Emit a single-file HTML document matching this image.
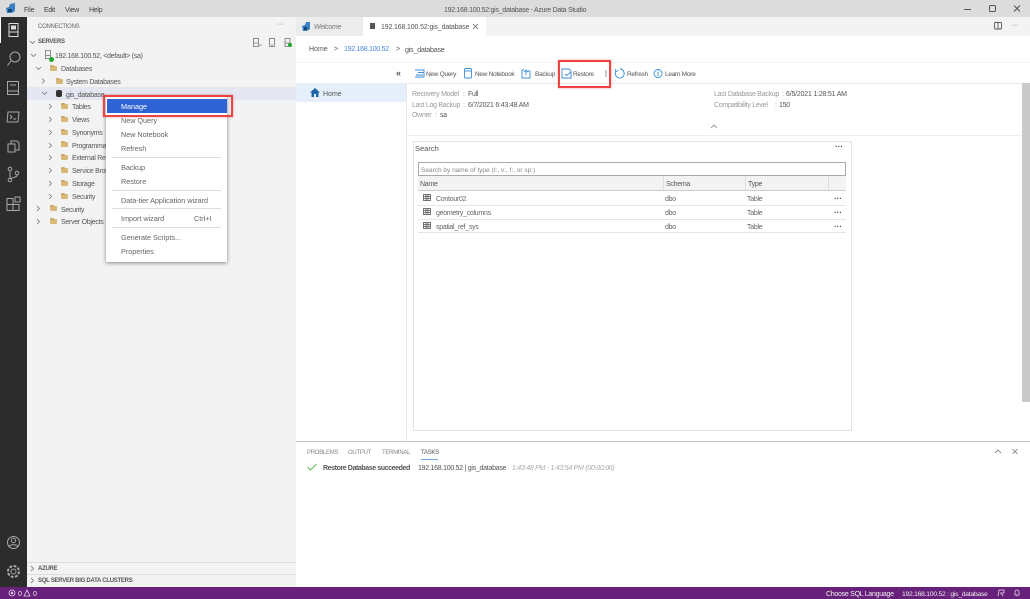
<!DOCTYPE html>
<html><head><meta charset="utf-8"><style>
html,body{margin:0;padding:0;width:1030px;height:599px;overflow:hidden;background:#fff}
#r{position:relative;width:1030px;height:599px;overflow:hidden;font-family:"Liberation Sans",sans-serif;font-size:7px;letter-spacing:-.27px;color:#555;filter:blur(.35px)}
#r div{position:absolute;white-space:nowrap}
.t{line-height:14px;height:14px}
svg{position:absolute;overflow:visible}
.f{width:7px;height:5px;background:#d8b878;border-radius:1px}
.f:before{content:"";position:absolute;left:0;top:-1px;width:4px;height:2px;background:#c9a968;border-radius:1px}
.m{color:#666;left:121px;font-size:7.3px;letter-spacing:-.05px}
.sep{left:112px;width:109px;height:1px;background:#ddd}
.dots{color:#444;font-weight:bold;font-size:8px;letter-spacing:0}
.u{font-size:6px}
</style></head><body><div id="r">

<!-- title bar -->
<div style="left:0;top:0;width:1030px;height:17px;background:#dcdcdc"></div>
<svg style="left:5px;top:3px" width="11" height="11" viewBox="0 0 11 11"><path d="M1 5l3-1 1-3 5-1v8l-3 2H2z" fill="#3b7fc4"/><path d="M3 6h4v3H3z" fill="#17466f"/></svg>
<div class="t" style="left:24px;top:4px;color:#444">File</div>
<div class="t" style="left:44px;top:4px;color:#444">Edit</div>
<div class="t" style="left:65px;top:4px;color:#444">View</div>
<div class="t" style="left:89px;top:4px;color:#444">Help</div>
<div class="t" style="left:444px;top:4px;color:#555">192.168.100.52:gis_database - Azure Data Studio</div>
<svg style="left:960px;top:3px" width="70" height="12" viewBox="0 0 70 12" fill="none" stroke="#555" stroke-width="1"><path d="M4 6.500h7"/><rect x="29.500" y="2.500" width="6" height="6" rx="1"/><path d="M54 2.500l6 6M60 2.500l-6 6"/></svg>

<!-- activity bar -->
<div style="left:0;top:17px;width:27px;height:570px;background:#2c2c2c"></div>
<div style="left:0;top:17px;width:1px;height:26px;background:#fff"></div>
<svg style="left:0;top:17px" width="27" height="570" viewBox="0 0 27 570" fill="none" stroke="#a9a9a9" stroke-width="1">
<g stroke="#ddd"><rect x="9" y="6.500" width="9" height="13"/><path d="M9 15h9"/><rect x="11" y="8.500" width="5" height="4" fill="#ddd" stroke="none"/></g>
<circle cx="15" cy="40" r="5"/><path d="M11 44l-3.500 4.500"/>
<rect x="7.500" y="64.500" width="11" height="13"/><path d="M7.500 74h11M10 68h6"/>
<path d="M8 95h11l-1 10H7zM10 98l2 2-2 2M13 102h3"/>
<path d="M8 127h7v8H8zM11 127v-3h6l2 2v7h-4"/>
<circle cx="10" cy="152" r="1.800"/><circle cx="10" cy="163" r="1.800"/><circle cx="17" cy="156" r="1.800"/><path d="M10 154v7M17 158c0 3-5 2-7 4"/>
<path d="M7 181.500h6v6H7zM7 187.500h6v6H7zM13 187.500h6v6h-6zM15 180h5v5h-5z"/>
<circle cx="13.500" cy="525.500" r="6"/><circle cx="13.500" cy="523.500" r="2.200"/><path d="M9 530c1-3 8-3 9 0"/>
<circle cx="13.500" cy="554.500" r="2.500"/><circle cx="13.500" cy="554.500" r="5.500" stroke-dasharray="2.800 1.500" stroke-width="2"/>
</svg>

<!-- sidebar -->
<div style="left:27px;top:17px;width:269px;height:570px;background:#f3f3f3"></div>
<div class="t u" style="left:38px;top:20px;color:#666">CONNECTIONS</div>
<div class="t" style="left:277px;top:18px;color:#666">···</div>
<div class="t u" style="left:38px;top:35px;font-weight:bold;color:#555">SERVERS</div>
<div style="left:27px;top:87px;width:269px;height:13px;background:#e4e6f1"></div>
<svg style="left:27px;top:17px" width="269" height="225" viewBox="27 17 269 225" fill="none" stroke="#777" stroke-width=".8">
<path d="M30 41l2.500 2.500L35 41M31 54l2.500 2.500L36 54M36 67l2.500 2.500L41 67M42 78.500l2.500 2.500-2.500 2.500M42 92l2.500 2.500L47 92"/>
<path d="M49 104l2.500 2.500-2.500 2.500M49 117l2.500 2.500-2.500 2.500M49 130l2.500 2.500-2.500 2.500M49 143l2.500 2.500-2.500 2.500M49 155l2.500 2.500-2.500 2.500M49 168l2.500 2.500-2.500 2.500M49 181l2.500 2.500-2.500 2.500M49 194l2.500 2.500-2.500 2.500"/>
<path d="M37 206l2.500 2.500-2.500 2.500M37 219l2.500 2.500-2.500 2.500"/>
<rect x="45.500" y="50.500" width="5" height="8"/><path d="M45.500 55.500h5"/>
<rect x="253.500" y="38.500" width="5" height="8"/><path d="M253.500 43h5M259 45h3"/>
<rect x="269.500" y="38.500" width="5" height="8"/><path d="M272 47v-3"/>
<rect x="285" y="38.500" width="5" height="8"/><path d="M285 43h5"/>
</svg>
<div style="left:49px;top:57px;width:5px;height:5px;border-radius:50%;background:#1fa82e"></div>
<div style="left:288px;top:43px;width:4px;height:4px;border-radius:50%;background:#1fa82e"></div>
<div class="t" style="left:55px;top:50px">192.168.100.52, &lt;default&gt; (sa)</div>
<div class="f" style="left:50px;top:66px"></div><div class="t" style="left:61px;top:63px">Databases</div>
<div class="f" style="left:56px;top:79px"></div><div class="t" style="left:66px;top:76px">System Databases</div>
<div style="left:56px;top:90px;width:6px;height:7px;background:#333;border-radius:2px"></div><div class="t" style="left:66px;top:89px">gis_database</div>
<div class="f" style="left:61px;top:104px"></div><div class="t" style="left:72px;top:101px">Tables</div>
<div class="f" style="left:61px;top:117px"></div><div class="t" style="left:72px;top:114px">Views</div>
<div class="f" style="left:61px;top:130px"></div><div class="t" style="left:72px;top:127px">Synonyms</div>
<div class="f" style="left:61px;top:142px"></div><div class="t" style="left:72px;top:140px">Programmability</div>
<div class="f" style="left:61px;top:155px"></div><div class="t" style="left:72px;top:152px">External Resources</div>
<div class="f" style="left:61px;top:168px"></div><div class="t" style="left:72px;top:165px">Service Broker</div>
<div class="f" style="left:61px;top:181px"></div><div class="t" style="left:72px;top:178px">Storage</div>
<div class="f" style="left:61px;top:194px"></div><div class="t" style="left:72px;top:191px">Security</div>
<div class="f" style="left:50px;top:206px"></div><div class="t" style="left:61px;top:204px">Security</div>
<div class="f" style="left:50px;top:219px"></div><div class="t" style="left:61px;top:216px">Server Objects</div>

<div style="left:27px;top:562px;width:269px;height:1px;background:#ddd"></div>
<div style="left:27px;top:574px;width:269px;height:1px;background:#ddd"></div>
<svg style="left:27px;top:563px" width="20" height="24" fill="none" stroke="#777" stroke-width=".8"><path d="M4 3l2.500 2.500L4 8M4 15l2.500 2.500L4 20"/></svg>
<div class="t u" style="left:38px;top:562px;font-weight:bold">AZURE</div>
<div class="t u" style="left:38px;top:574px;font-weight:bold">SQL SERVER BIG DATA CLUSTERS</div>

<!-- context menu -->
<div style="left:106px;top:97px;width:121px;height:165px;background:#fff;box-shadow:0 1px 4px rgba(0,0,0,.45)"></div>
<div style="left:107px;top:99px;width:120px;height:14px;background:#2f62d5"></div>
<div class="t m" style="top:100px;color:#fff">Manage</div>
<div class="t m" style="top:114px">New Query</div>
<div class="t m" style="top:128px">New Notebook</div>
<div class="t m" style="top:142px">Refresh</div>
<div class="sep" style="top:157px"></div>
<div class="t m" style="top:161px">Backup</div>
<div class="t m" style="top:175px">Restore</div>
<div class="sep" style="top:190px"></div>
<div class="t m" style="top:194px">Data-tier Application wizard</div>
<div class="sep" style="top:208px"></div>
<div class="t m" style="top:212px">Import wizard</div>
<div class="t m" style="left:194px;top:212px">Ctrl+I</div>
<div class="sep" style="top:227px"></div>
<div class="t m" style="top:231px">Generate Scripts...</div>
<div class="t m" style="top:245px">Properties</div>
<div style="left:103px;top:95px;width:126px;height:18px;border:2px solid #ee4444;box-shadow:0 0 2px rgba(200,60,60,.5)"></div>

<!-- tabs -->
<div style="left:296px;top:17px;width:734px;height:19px;background:#f3f3f3"></div>
<div style="left:296px;top:17px;width:67px;height:19px;background:#ececec"></div>
<div style="left:363px;top:17px;width:123px;height:19px;background:#fff"></div>
<svg style="left:301px;top:22px" width="10" height="10" viewBox="0 0 10 10"><path d="M1 4l3-1 1-3 4 0v7l-3 2H2z" fill="#3b7fc4"/><path d="M3 5h3v3H3z" fill="#17466f"/></svg>
<div class="t" style="left:314px;top:21px;font-style:italic;color:#777">Welcome</div>
<div style="left:370px;top:23px;width:5px;height:6px;background:#555"></div>
<div class="t" style="left:381px;top:21px;letter-spacing:-.15px">192.168.100.52:gis_database</div>
<svg style="left:472px;top:23px" width="7" height="7" fill="none" stroke="#666" stroke-width=".8"><path d="M1 1l5 5M6 1l-5 5"/></svg>
<svg style="left:994px;top:21px" width="30" height="10" fill="none" stroke="#555" stroke-width=".9"><rect x=".5" y="1.500" width="7" height="6.500" rx="1"/><path d="M4 1.500v6.500"/></svg>
<div class="t" style="left:1012px;top:19px;color:#666">···</div>

<!-- breadcrumb -->
<div class="t" style="left:309px;top:43px;letter-spacing:0">Home</div>
<div class="t" style="left:334px;top:43px">&gt;</div>
<div class="t" style="left:344px;top:43px;color:#4a86d8">192.168.100.52</div>
<div class="t" style="left:396px;top:43px">&gt;</div>
<div class="t" style="left:405px;top:43px;font-size:7.200px">gis_database</div>
<div style="left:296px;top:62px;width:734px;height:1px;background:#f4f4f4"></div>

<!-- left nav -->
<div class="t" style="left:396px;top:66px;color:#555;font-size:9px;font-weight:bold">«</div>
<div style="left:296px;top:83px;width:110px;height:19px;background:#e4eff9"></div>
<svg style="left:310px;top:88px" width="10" height="9" viewBox="0 0 10 9"><path d="M0 4.500L5 0l5 4.500H8.500V9H6V6H4v3H1.500V4.500z" fill="#1f65a8"/></svg>
<div class="t" style="left:323px;top:88px;letter-spacing:0">Home</div>
<div style="left:406px;top:83px;width:1px;height:358px;background:#e8e8e8"></div>
<div style="left:407px;top:83px;width:623px;height:1px;background:#e8e8e8"></div>

<!-- toolbar -->
<svg style="left:413px;top:66px" width="300" height="15" fill="none" stroke="#3b8ed8" stroke-width=".9">
<path d="M2 4h9v7H2M5 6.500h6M3 9h7"/>
<rect x="51.500" y="2.500" width="7" height="9.500" rx="1"/><path d="M52 5h6"/>
<path d="M111 4h-2v8h8V5h-2M113 9V4M111 6l2-2 2 2"/>
<path d="M149 3h7l2 2v7h-9zM152 8l1.500 1.500L158 6"/>
<path d="M207 3a4.500 4.500 0 1 1-4 2M202 3l1 2.500 2.500-1"/>
<circle cx="245" cy="7.500" r="4"/><path d="M245 6v4M245 4.500v.8"/>
</svg>
<div class="t" style="left:426px;top:68px;font-size:6.500px">New Query</div>
<div class="t" style="left:475px;top:68px;font-size:6.500px">New Notebook</div>
<div class="t" style="left:535px;top:68px;font-size:6.500px">Backup</div>
<div class="t" style="left:573px;top:68px;font-size:6.500px">Restore</div>
<div class="t" style="left:627px;top:68px;font-size:6.500px">Refresh</div>
<div class="t" style="left:665px;top:68px;font-size:6.500px">Learn More</div>
<div style="left:605px;top:70px;width:2px;height:7px;background:#ccc"></div>
<div style="left:558px;top:60px;width:49px;height:24px;border:2px solid #ee4444;box-shadow:0 0 2px rgba(200,60,60,.5)"></div>

<!-- properties -->
<div class="t" style="left:412px;top:88px;color:#999">Recovery Model</div><div class="t" style="left:463px;top:88px;color:#999">:</div>
<div class="t" style="left:468px;top:88px">Full</div>
<div class="t" style="left:412px;top:99px;color:#999">Last Log Backup</div><div class="t" style="left:463px;top:99px;color:#999">:</div>
<div class="t" style="left:468px;top:99px;letter-spacing:-.2px">6/7/2021 6:43:48 AM</div>
<div class="t" style="left:412px;top:109px;color:#999">Owner</div><div class="t" style="left:435px;top:109px;color:#999">:</div>
<div class="t" style="left:440px;top:109px">sa</div>
<div class="t" style="left:714px;top:88px;color:#999">Last Database Backup</div><div class="t" style="left:782px;top:88px;color:#999">:</div>
<div class="t" style="left:786px;top:88px;letter-spacing:-.2px">6/5/2021 1:28:51 AM</div>
<div class="t" style="left:714px;top:99px;color:#999">Compatibility Level</div><div class="t" style="left:775px;top:99px;color:#999">:</div>
<div class="t" style="left:779px;top:99px">150</div>
<svg style="left:710px;top:124px" width="8" height="5" fill="none" stroke="#888" stroke-width=".8"><path d="M1 4l3-3 3 3"/></svg>
<div style="left:407px;top:135px;width:615px;height:1px;background:#eee"></div>
<div style="left:1022px;top:83px;width:8px;height:319px;background:#c9c9c9"></div>

<!-- search widget -->
<div style="left:413px;top:141px;width:437px;height:288px;border:1px solid #e4e4e4"></div>
<div class="t" style="left:415px;top:142px;font-size:7.500px;letter-spacing:0">Search</div>
<div class="t dots" style="left:835px;top:140px">···</div>
<div style="left:418px;top:162px;width:426px;height:12px;border:1px solid #aaa"></div>
<div class="t" style="left:421px;top:164px;color:#888;font-size:6.500px;letter-spacing:0">Search by name of type (t:, v:, f:, or sp:)</div>
<div style="left:418px;top:176px;width:428px;height:14px;background:#f3f3f3;border-bottom:1px solid #ccc"></div>
<div style="left:663px;top:176px;width:1px;height:14px;background:#ddd"></div>
<div style="left:745px;top:176px;width:1px;height:14px;background:#ddd"></div>
<div style="left:828px;top:176px;width:1px;height:14px;background:#ddd"></div>
<div class="t" style="left:420px;top:178px">Name</div>
<div class="t" style="left:666px;top:178px">Schema</div>
<div class="t" style="left:748px;top:178px">Type</div>
<div style="left:418px;top:205px;width:428px;height:1px;background:#e6e6e6"></div>
<div style="left:418px;top:219px;width:428px;height:1px;background:#e6e6e6"></div>
<div style="left:418px;top:232px;width:428px;height:1px;background:#e6e6e6"></div>
<svg style="left:423px;top:194px" width="8" height="36" fill="#fff" stroke="#555" stroke-width=".8"><g><rect x=".5" y=".5" width="7" height="6"/><path d="M.5 2.500h7M.5 4.500h7M3 .5v6M5 .5v6"/></g><g transform="translate(0 14)"><rect x=".5" y=".5" width="7" height="6"/><path d="M.5 2.500h7M.5 4.500h7M3 .5v6M5 .5v6"/></g><g transform="translate(0 28)"><rect x=".5" y=".5" width="7" height="6"/><path d="M.5 2.500h7M.5 4.500h7M3 .5v6M5 .5v6"/></g></svg>
<div class="t" style="left:436px;top:193px;color:#666">Contour02</div>
<div class="t" style="left:665px;top:193px;color:#666">dbo</div>
<div class="t" style="left:747px;top:193px;color:#666">Table</div>
<div class="t dots" style="left:834px;top:192px">···</div>
<div class="t" style="left:436px;top:207px;color:#666">geometry_columns</div>
<div class="t" style="left:665px;top:207px;color:#666">dbo</div>
<div class="t" style="left:747px;top:207px;color:#666">Table</div>
<div class="t dots" style="left:834px;top:206px">···</div>
<div class="t" style="left:436px;top:221px;color:#666">spatial_ref_sys</div>
<div class="t" style="left:665px;top:221px;color:#666">dbo</div>
<div class="t" style="left:747px;top:221px;color:#666">Table</div>
<div class="t dots" style="left:834px;top:220px">···</div>

<!-- panel -->
<div style="left:296px;top:441px;width:734px;height:1px;background:#c4c4c4"></div>
<div class="t u" style="left:307px;top:446px;color:#888">PROBLEMS</div>
<div class="t u" style="left:348px;top:446px;color:#888">OUTPUT</div>
<div class="t u" style="left:382px;top:446px;color:#888">TERMINAL</div>
<div class="t u" style="left:421px;top:446px;color:#555">TASKS</div>
<div style="left:421px;top:459px;width:17px;height:1px;background:#6fa8dc"></div>
<svg style="left:994px;top:447px" width="26" height="9" fill="none" stroke="#777" stroke-width=".8"><path d="M1 6l3-3 3 3M18.500 2l5 5M23.500 2l-5 5"/></svg>
<svg style="left:307px;top:463px" width="10" height="8" fill="none" stroke="#5cb85c" stroke-width="1"><path d="M.5 4l3 3L9.500 1"/></svg>
<div class="t" style="left:323px;top:462px;font-weight:bold;letter-spacing:-.4px">Restore Database succeeded</div>
<div class="t" style="left:418px;top:462px">192.168.100.52 | gis_database</div>
<div class="t" style="left:512px;top:462px;font-style:italic;color:#aaa">1:43:48 PM - 1:43:54 PM (00:00:06)</div>

<!-- status bar -->
<div style="left:0;top:587px;width:1030px;height:12px;background:#68217a"></div>
<svg style="left:8px;top:589px" width="30" height="8" fill="none" stroke="#e8d8ee" stroke-width=".8"><circle cx="4" cy="4" r="3"/><path d="M2.800 2.800l2.400 2.400M5.200 2.800L2.800 5.200M16 7l3-6 3 6z"/></svg>
<div class="t" style="left:18px;top:588px;color:#eee">0</div>
<div class="t" style="left:33px;top:588px;color:#eee">0</div>
<div class="t" style="left:826px;top:588px;color:#eee">Choose SQL Language</div>
<div class="t" style="left:902px;top:588px;color:#eee;font-size:6.800px">192.168.100.52 : gis_database</div>
<svg style="left:997px;top:589px" width="24" height="8" fill="none" stroke="#e8d8ee" stroke-width=".8"><path d="M1 7l1-6h5v3H3M4 4l2 3M18 6V3a2 2 0 0 1 4 0v3zM19.500 7h1"/></svg>
</div></body></html>
